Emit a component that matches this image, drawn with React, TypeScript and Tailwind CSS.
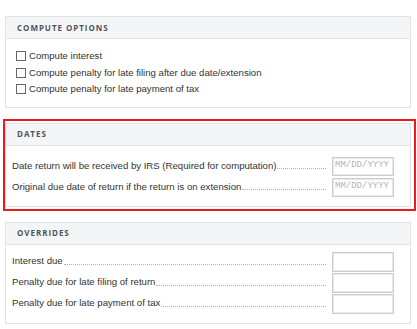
const headFont = { fontFamily: '"Open Sans", "Liberation Sans", sans-serif' };
const bodyFont = { fontFamily: '"Liberation Sans", Arial, sans-serif' };

function PanelHeader({ title }: { title: string }) {
   return (
      <div
         className="flex h-[22px] items-center border-b border-[#e3e3e3] bg-[#f4f5f6] px-[11px] text-[8px] font-bold tracking-[0.12em] text-[#50555b]"
         style={headFont}
      >
         {title}
      </div>
   );
}

function CheckRow({ label }: { label: string }) {
   return (
      <div className="flex h-[16.5px] items-center gap-[3px]">
         <span className="h-[10px] w-[10px] border border-[#666] bg-white"></span>
         <span>{label}</span>
      </div>
   );
}

function LeaderRow({ label, placeholder, h }: { label: string; placeholder?: string; h: string }) {
   return (
      <div className={`flex items-center ${h}`}>
         <span className="whitespace-nowrap">{label}</span>
         <span className="mt-[5px] ml-[1px] flex-1 border-b border-dotted border-[#b0b0b0]"></span>
         <input
            className="ml-[6px] w-[62px] self-stretch border border-[#cdcdcd] bg-white px-[2px] text-[9px] text-[#333] shadow-[inset_0_0_0_1px_#e8e8e8] outline-none placeholder:text-[#b5b5b5]"
            style={{ fontFamily: '"Liberation Mono", "Courier New", monospace' }}
            type="text"
            placeholder={placeholder}
         />
      </div>
   );
}

export default function App() {
   return (
      <div className="h-[329px] w-[417px] bg-white pt-[16px] pr-[6px] pl-[5px] text-[9.6px] text-[#333]" style={bodyFont}>
         <section className="border border-[#e3e3e3] bg-white">
            <PanelHeader title="COMPUTE OPTIONS" />
            <div className="pt-[9px] pb-[9px] pl-[10px]">
               <CheckRow label="Compute interest" />
               <CheckRow label="Compute penalty for late filing after due date/extension" />
               <CheckRow label="Compute penalty for late payment of tax" />
            </div>
         </section>

         <div className="mt-[11px] mr-[-5px] ml-[-2px] border-2 border-[#e81c1c] pt-[2px] pr-[3px] pb-[2px]">
            <section className="border border-[#e3e3e3] bg-white">
               <PanelHeader title="DATES" />
               <div className="flex flex-col gap-[2px] pt-[11px] pr-[16px] pb-[9px] pl-[6px]">
                  <LeaderRow
                     h="h-[19px]"
                     label="Date return will be received by IRS (Required for computation)"
                     placeholder="MM/DD/YYYY"
                  />
                  <LeaderRow
                     h="h-[19px]"
                     label="Original due date of return if the return is on extension"
                     placeholder="MM/DD/YYYY"
                  />
               </div>
            </section>
         </div>

         <section className="mt-[11px] border border-[#e3e3e3] bg-white">
            <PanelHeader title="OVERRIDES" />
            <div className="flex flex-col gap-[1px] pt-[7px] pr-[16px] pb-[9px] pl-[6px]">
               <LeaderRow h="h-[20px]" label="Interest due" />
               <LeaderRow h="h-[20px]" label="Penalty due for late filing of return" />
               <LeaderRow h="h-[20px]" label="Penalty due for late payment of tax" />
            </div>
         </section>
      </div>
   );
}
